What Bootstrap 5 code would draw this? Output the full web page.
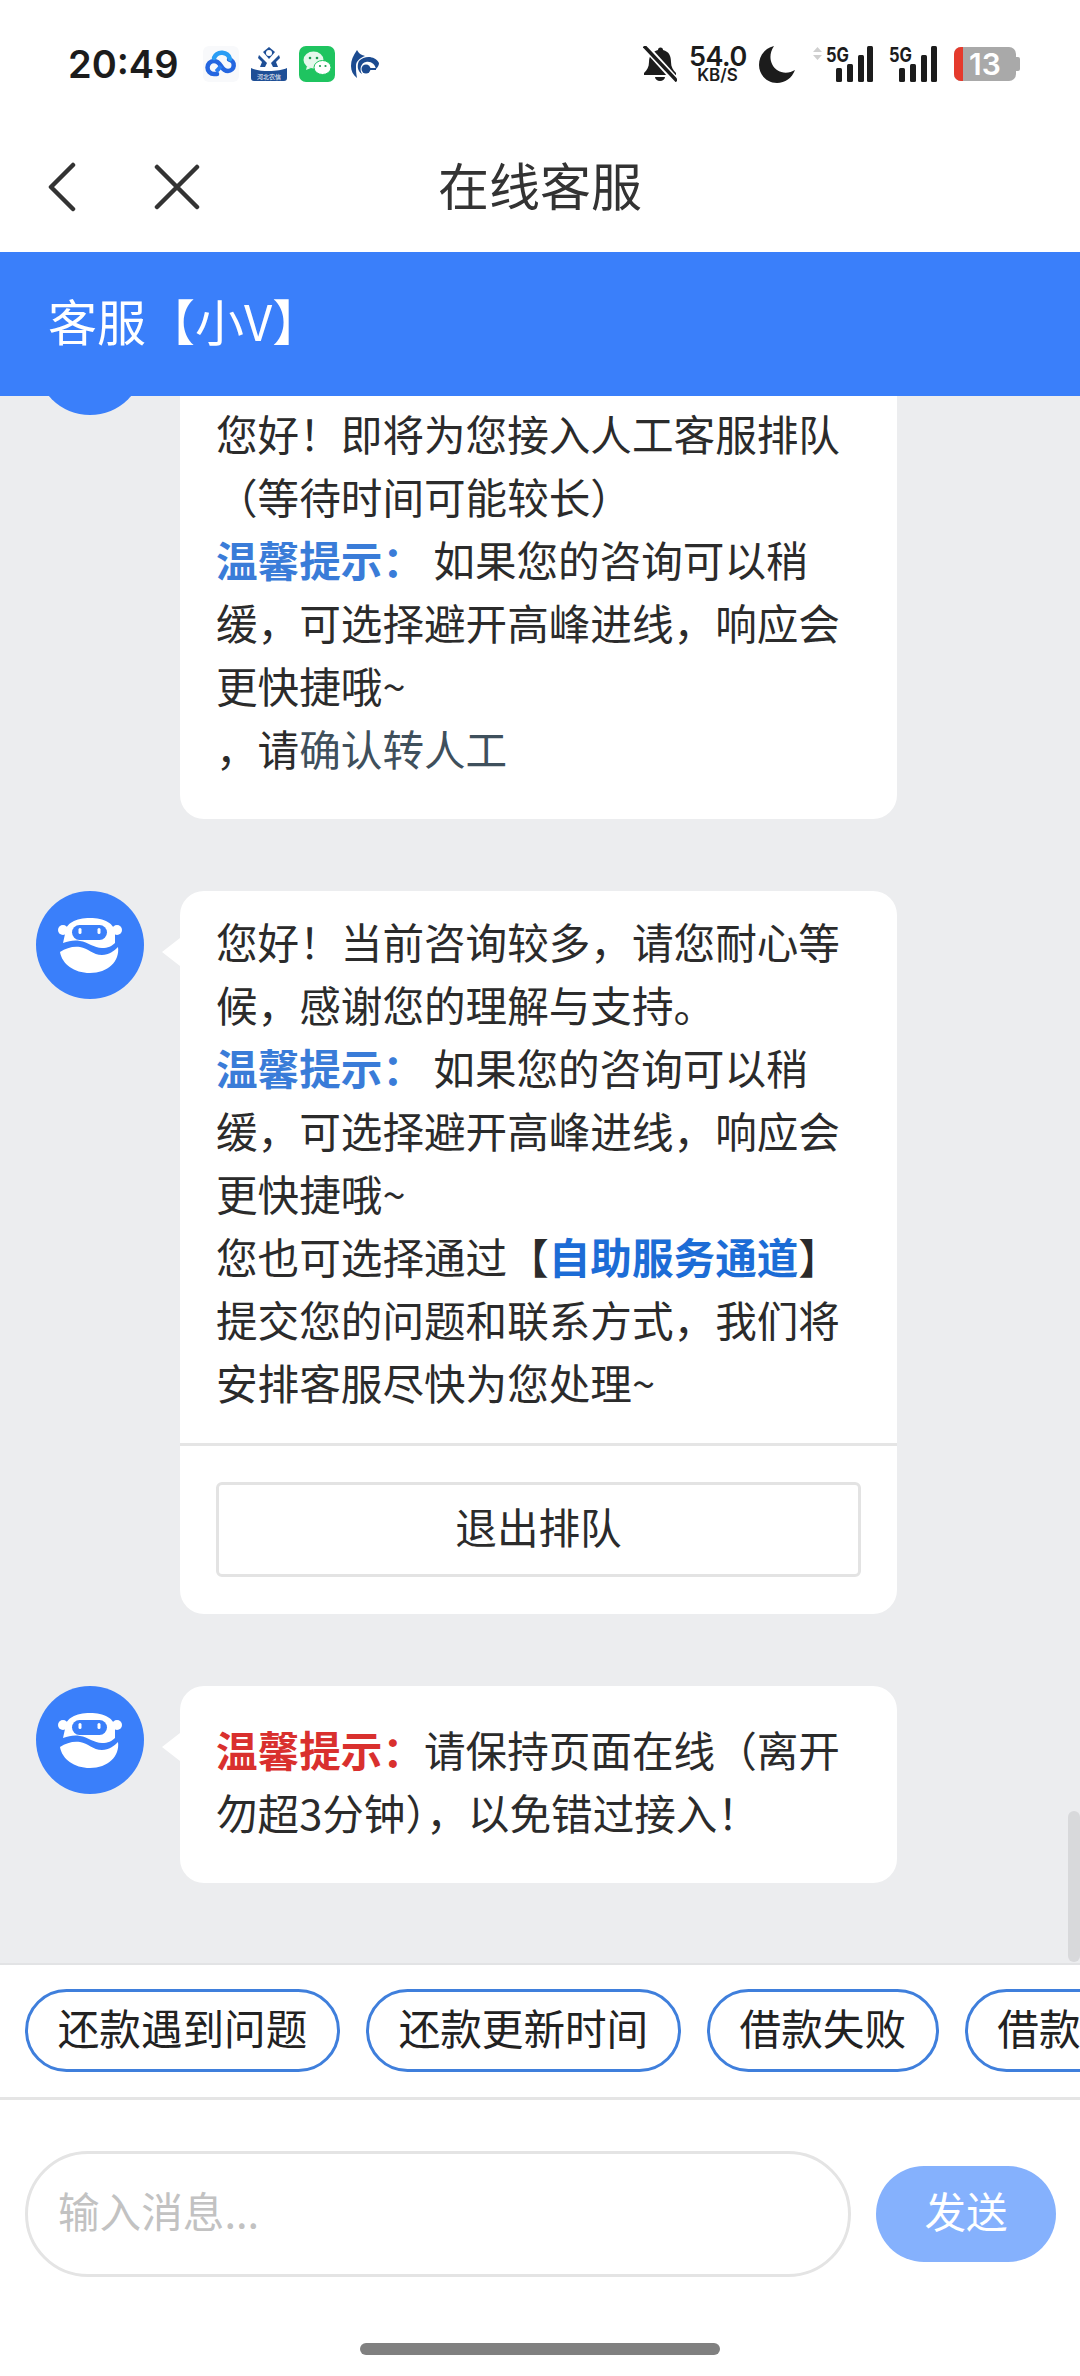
<!DOCTYPE html>
<html lang="zh-CN">
<head>
    <meta charset="UTF-8">
    <meta name="viewport" content="width=device-width, initial-scale=1.0">
    <title>在线客服</title>
    <link href="https://cdn.jsdelivr.net/npm/bootstrap@5.3.3/dist/css/bootstrap.min.css" rel="stylesheet">
    <style>
        body {
            width: 1080px;
            height: 2376px;
            font-family: "Noto Sans CJK SC", "Noto Sans", sans-serif;
            color: #2b2b2b;
            background: #fff;
            overflow: hidden;
        }

        /* status bar */
        .status-bar {
            height: 125px;
            padding: 41px 60px 0 68px;
        }
        .left-group { margin-top: 4px; }
        .clock {
            font: 600 38px/38px Inter, sans-serif;
            color: #1c1c1c;
            margin-right: 27px;
            width: 108px;
        }
        .left-icons { gap: 12px; }
        .speed-box {
            width: 57px;
            margin: 0 13px 0 12px;
            font-family: Inter, sans-serif;
            font-weight: 600;
            color: #1c1c1c;
            text-align: center;
        }
        .speed-num { font-size: 27px; line-height: 22px; letter-spacing: -0.5px; }
        .speed-unit { font-size: 17px; line-height: 15px; }
        .moon-icon { margin-right: 18px; }
        .signal-two { margin: 0 17px 0 16px; }

        /* title */
        .title-bar {
            height: 127px;
            display: grid;
            grid-template-columns: 1fr auto 1fr;
            padding: 0 47px 4px;
        }
        .title-text { font-size: 51px; color: #333; line-height: 1; padding-bottom: 4px; }
        .back-btns { gap: 78px; }

        .chat-head {
            height: 144px;
            padding: 0 0 8px 48px;
            background: #3a7ffa;
            color: #fff;
            font-size: 49px;
            position: relative;
            z-index: 2;
        }

        /* chat */
        .chat-area {
            height: 1567px;
            background: #ecedef;
            padding: 0 0 80px 36px;
            overflow: hidden;
            position: relative;
        }
        .msg-row { gap: 36px; margin-top: 72px; flex-shrink: 0; }
        .avatar-box {
            width: 108px;
            height: 108px;
            flex-shrink: 0;
        }
        .bubble {
            width: 717px;
            background: #fff;
            border-radius: 24px;
            font-size: 41.6px;
            line-height: 63px;
            position: relative;
        }
        .bubble::before {
            content: "";
            position: absolute;
            left: -18px;
            top: 47px;
            border-style: solid;
            border-width: 14px 18px 14px 0;
            border-color: transparent #fff transparent transparent;
        }
        .bubble-text { padding: 32px 36px 39px; }
        .bubble-top-hidden { padding-top: 95px; }
        .bubble-queue { padding: 19px 36px 29px; }
        .bubble-foot {
            border-top: 3px solid #e5e5e5;
            padding: 36px 36px 37px;
        }
        .tip-blue { color: #3a7cd8; font-weight: 700; }
        .tip-red { color: #d9302e; font-weight: 700; }
        .link-self { color: #1c6cd6; font-weight: 700; }
        .link-slate { color: #3f505c; }
        .quit-btn {
            height: 95px;
            border: 3px solid #e3e3e3;
            border-radius: 6px;
            padding: 0 0 6px;
            font-size: 41.6px;
            line-height: 1;
            color: #2b2b2b;
            background: #fff;
        }
        .scroll-thumb {
            position: absolute;
            right: 0;
            top: 1415px;
            width: 12px;
            height: 151px;
            border-radius: 6px;
            background: #d8d9db;
        }

        /* quick chips */
        .chip-row {
            height: 137px;
            gap: 26px;
            padding: 24px 0 0 25px;
            border-top: 2px solid #e2e3e5;
            border-bottom: 3px solid #e5e5e5;
            overflow: hidden;
        }
        .chip-btn {
            flex-shrink: 0;
            height: 83px;
            padding: 0 29.7px 6px;
            border: 3px solid #3f7fdc;
            border-radius: 42px;
            font-size: 41.6px;
            line-height: 1;
            color: #222;
            background: #fff;
            white-space: nowrap;
        }

        /* input */
        .input-zone { padding: 51px 24px 0 25px; gap: 25px; }
        .msg-input {
            width: 826px;
            height: 126px;
            border: 3px solid #e4e4e4;
            padding: 0 30px 8px;
            font-size: 41.6px;
            flex-shrink: 0;
        }
        .msg-input::placeholder { color: #c2c2c2; opacity: 1; }
        .send-btn {
            width: 180px;
            height: 96px;
            border: 0;
            border-radius: 48px;
            background: #85b1fd;
            color: #fff;
            font-size: 41.6px;
            line-height: 1;
            padding: 0 0 6px;
        }
        .home-bar {
            width: 360px;
            height: 12px;
            margin: 66px auto 0;
            background: #808080;
            border-radius: 6px;
        }
    </style>
</head>
<body>
    <svg width="0" height="0" class="d-block">
        <symbol id="robot" viewBox="0 0 108 108">
            <circle cx="54" cy="54" r="54" fill="#3a7ffa"/>
            <circle cx="27" cy="39" r="5" fill="#fff"/>
            <circle cx="81" cy="39" r="5" fill="#fff"/>
            <path d="M27 52 C33 50 38 49 44 50 C52 51 58 57 66 57 C72 57 76 55 79 52 V43 C79 32 68 27 54 27 C40 27 29 32 29 43Z" fill="#fff"/>
            <rect x="36" y="34" width="35" height="15" rx="7.500" fill="#3a7ffa"/>
            <rect x="42.500" y="37" width="3" height="6" rx="1.500" fill="#fff"/>
            <rect x="61.500" y="37" width="3" height="6" rx="1.500" fill="#fff"/>
            <path d="M24 61 C30 57 37 55 44 56 C52 57 57 64 66 64 C73 64 78 60 82 56 C84 70 72 82 54 82 C38 82 26 73 24 61Z" fill="#fff"/>
        </symbol>
    </svg>

    <div class="status-bar d-flex justify-content-between align-items-start">
        <div class="d-flex align-items-center left-group">
            <div class="clock">20:49</div>
            <div class="d-flex left-icons align-items-center">
                <svg width="36" height="36" viewBox="0 0 36 36">
                    <rect width="36" height="36" rx="6" fill="#f8f9fb"/>
                    <path d="M14 28 H11 a6.500 6.500 0 0 1 0 -13 c3.500 0 5.500 2.500 7 5 s3.500 5 7 5 a5.800 5.800 0 0 0 1 -11.500" fill="none" stroke="#2566e0" stroke-width="4.500" stroke-linecap="round"/>
                    <path d="M27 13 a8.500 8.500 0 0 0 -16 -1" fill="none" stroke="#2a9df4" stroke-width="4.500" stroke-linecap="round"/>
                    <path d="M18 20 c-1.500 2 -3 4 -5 5.500" fill="none" stroke="#2a7df0" stroke-width="4"/>
                </svg>
                <svg width="36" height="36" viewBox="0 0 36 36">
                    <path d="M18 1 l6 5 -6 7 -6 -7z" fill="#1f4f96"/>
                    <circle cx="18" cy="7" r="3" fill="#fff"/>
                    <path d="M8 9 l8 8 -2 4 h-5 l2 -5 -4 -4z M28 9 l-8 8 2 4 h5 l-2 -5 4 -4z" fill="#1f4f96"/>
                    <path d="M0 22 C8 26 28 26 36 22 V32 Q36 35 33 35 H3 Q0 35 0 32Z" fill="#1f4f96"/>
                    <text x="18" y="33" text-anchor="middle" font-size="6" fill="#fff">河北农信</text>
                </svg>
                <svg width="36" height="36" viewBox="0 0 36 36">
                    <rect width="36" height="36" rx="7" fill="#1fc460"/>
                    <ellipse cx="14.500" cy="14" rx="10" ry="8.500" fill="#e6f8ec"/>
                    <path d="M8 20 l-1 4 5 -2z" fill="#e6f8ec"/>
                    <ellipse cx="23.500" cy="21.500" rx="8.500" ry="7" fill="#fff" stroke="#1fc460" stroke-width="1"/>
                    <circle cx="11" cy="12" r="1.300" fill="#1a9c50"/>
                    <circle cx="18" cy="12" r="1.300" fill="#1a9c50"/>
                    <circle cx="21" cy="20" r="1.100" fill="#1a9c50"/>
                    <circle cx="26.500" cy="20" r="1.100" fill="#1a9c50"/>
                </svg>
                <svg width="36" height="36" viewBox="0 0 36 36">
                    <path d="M10 4 C6 10 4 14 4 20 C4 25 6 29 10 32 C9 27 9 24 9 20 C9 15 13 12 18 10 C15 9 12 8 10 4Z" fill="#1c4b90"/>
                    <path d="M12 15 C18 9 28 10 32 17 C32 19 31 21 29 23 C28 18 24 15 19 16 C14 17 12 23 15 28 C10 25 10 19 12 15Z" fill="#1c4b90"/>
                    <circle cx="19" cy="23" r="4.500" fill="#1c4b90"/>
                    <path d="M23 23 h6" stroke="#1c4b90" stroke-width="2"/>
                </svg>
            </div>
        </div>
        <div class="d-flex align-items-center">
            <svg width="34" height="36" viewBox="0 0 34 36">
                <path d="M15 4 a2.500 2.500 0 0 1 5 0 c6 1.500 8 6 8 12 c0 5 2 8 5 11 v2 H1 v-2 c3 -3 5 -6 5 -11 c0 -6 3 -10.500 9 -12z" fill="#1c1c1c"/>
                <path d="M12 31 h10 a5 4 0 0 1 -10 0z" fill="#1c1c1c"/>
                <path d="M-1 -3 L36 38" stroke="#fff" stroke-width="7"/>
                <path d="M1 0 L34 35" stroke="#1c1c1c" stroke-width="3.500"/>
            </svg>
            <div class="speed-box">
                <div class="speed-num">54.0</div>
                <div class="speed-unit">KB/S</div>
            </div>
            <svg class="moon-icon" width="36" height="37" viewBox="0 0 36 37">
                <path d="M15 0 C9 9 11 19 18 24 C24 28 31 27 36 24 C33 32 26 37 18 37 C8 37 0 29 0 19 C0 10 6 2 15 0Z" fill="#1c1c1c"/>
            </svg>
            <svg width="60" height="46" viewBox="0 -4 60 46">
                <path d="M4.500 2 L9 7 H0Z M4.500 15 L9 10 H0Z" fill="#cfcfcf"/>
                <text x="13" y="16.500" font-family="Inter, sans-serif" font-weight="700" font-size="20" textLength="23" lengthAdjust="spacingAndGlyphs" fill="#1c1c1c">5G</text>
                <rect x="23" y="23" width="6" height="14" rx="1.500" fill="#1c1c1c"/>
                <rect x="34" y="19" width="6" height="18" rx="1.500" fill="#1c1c1c"/>
                <rect x="45" y="10" width="6" height="27" rx="1.500" fill="#1c1c1c"/>
                <rect x="54" y="1" width="6" height="36" rx="1.500" fill="#1c1c1c"/>
            </svg>
            <svg class="signal-two" width="48" height="46" viewBox="0 -4 48 46">
                <text x="0" y="16.500" font-family="Inter, sans-serif" font-weight="700" font-size="20" textLength="23" lengthAdjust="spacingAndGlyphs" fill="#1c1c1c">5G</text>
                <rect x="10" y="23" width="6" height="14" rx="1.500" fill="#1c1c1c"/>
                <rect x="21" y="19" width="6" height="18" rx="1.500" fill="#1c1c1c"/>
                <rect x="32" y="10" width="6" height="27" rx="1.500" fill="#1c1c1c"/>
                <rect x="42" y="1" width="6" height="36" rx="1.500" fill="#1c1c1c"/>
            </svg>
            <svg width="66" height="34" viewBox="0 0 66 34">
                <rect x="0" y="0" width="62" height="34" rx="7" fill="#a9a9a9"/>
                <path d="M7 0 H9 V34 H7 A7 7 0 0 1 0 27 V7 A7 7 0 0 1 7 0Z" fill="#e53a2c"/>
                <path d="M62 10 h2 a2 2 0 0 1 2 2 v10 a2 2 0 0 1 -2 2 h-2z" fill="#a9a9a9"/>
                <text x="31" y="28" text-anchor="middle" font-family="Inter, sans-serif" font-weight="600" font-size="30" fill="#fff">13</text>
            </svg>
        </div>
    </div>

    <div class="title-bar align-items-center">
        <div class="d-flex align-items-center back-btns">
            <svg width="29" height="50" viewBox="0 0 29 50"><path d="M26 3 L4 25 L26 47" fill="none" stroke="#333" stroke-width="4.500" stroke-linecap="round" stroke-linejoin="round"/></svg>
            <svg width="46" height="46" viewBox="0 0 46 46"><path d="M3 3 L43 43 M43 3 L3 43" fill="none" stroke="#333" stroke-width="4.500" stroke-linecap="round"/></svg>
        </div>
        <div class="title-text">在线客服</div>
        <div></div>
    </div>

    <div class="chat-head d-flex align-items-center">客服【小V】</div>

    <div class="chat-area d-flex flex-column justify-content-end">
        <div class="msg-row d-flex">
            <svg class="avatar-box"><use href="#robot"/></svg>
            <div class="bubble">
                <div class="bubble-text bubble-top-hidden">
                    您好&#xFF01;即将为您接入人工客服排队<br>
                    &#xFF08;等待时间可能较长&#xFF09;<br>
                    <span class="tip-blue">温馨提示&#xFF1A;</span> 如果您的咨询可以稍缓&#xFF0C;可选择避开高峰进线&#xFF0C;响应会更快捷哦~<br>
                    &#xFF0C;请<span class="link-slate">确认转人工</span>
                </div>
            </div>
        </div>

        <div class="msg-row d-flex">
            <svg class="avatar-box"><use href="#robot"/></svg>
            <div class="bubble">
                <div class="bubble-queue">
                    您好&#xFF01;当前咨询较多&#xFF0C;请您耐心等候&#xFF0C;感谢您的理解与支持。<br>
                    <span class="tip-blue">温馨提示&#xFF1A;</span> 如果您的咨询可以稍缓&#xFF0C;可选择避开高峰进线&#xFF0C;响应会更快捷哦~<br>
                    您也可选择通过【<span class="link-self">自助服务通道</span>】提交您的问题和联系方式&#xFF0C;我们将安排客服尽快为您处理~
                </div>
                <div class="bubble-foot">
                    <button type="button" class="btn quit-btn w-100">退出排队</button>
                </div>
            </div>
        </div>

        <div class="msg-row d-flex">
            <svg class="avatar-box"><use href="#robot"/></svg>
            <div class="bubble">
                <div class="bubble-text">
                    <span class="tip-red">温馨提示&#xFF1A;</span>请保持页面在线&#xFF08;离开勿超3分钟&#xFF09;&#xFF0C;以免错过接入&#xFF01;
                </div>
            </div>
        </div>
        <div class="scroll-thumb"></div>
    </div>

    <div class="chip-row d-flex align-items-start">
        <button type="button" class="btn chip-btn">还款遇到问题</button>
        <button type="button" class="btn chip-btn">还款更新时间</button>
        <button type="button" class="btn chip-btn">借款失败</button>
        <button type="button" class="btn chip-btn">借款咨询</button>
    </div>

    <div class="input-zone d-flex align-items-center">
        <input type="text" class="form-control rounded-pill msg-input" placeholder="输入消息...">
        <button type="button" class="btn send-btn">发送</button>
    </div>
    <div class="home-bar"></div>

    <script src="https://cdn.jsdelivr.net/npm/bootstrap@5.3.3/dist/js/bootstrap.bundle.min.js"></script>
</body>
</html>
